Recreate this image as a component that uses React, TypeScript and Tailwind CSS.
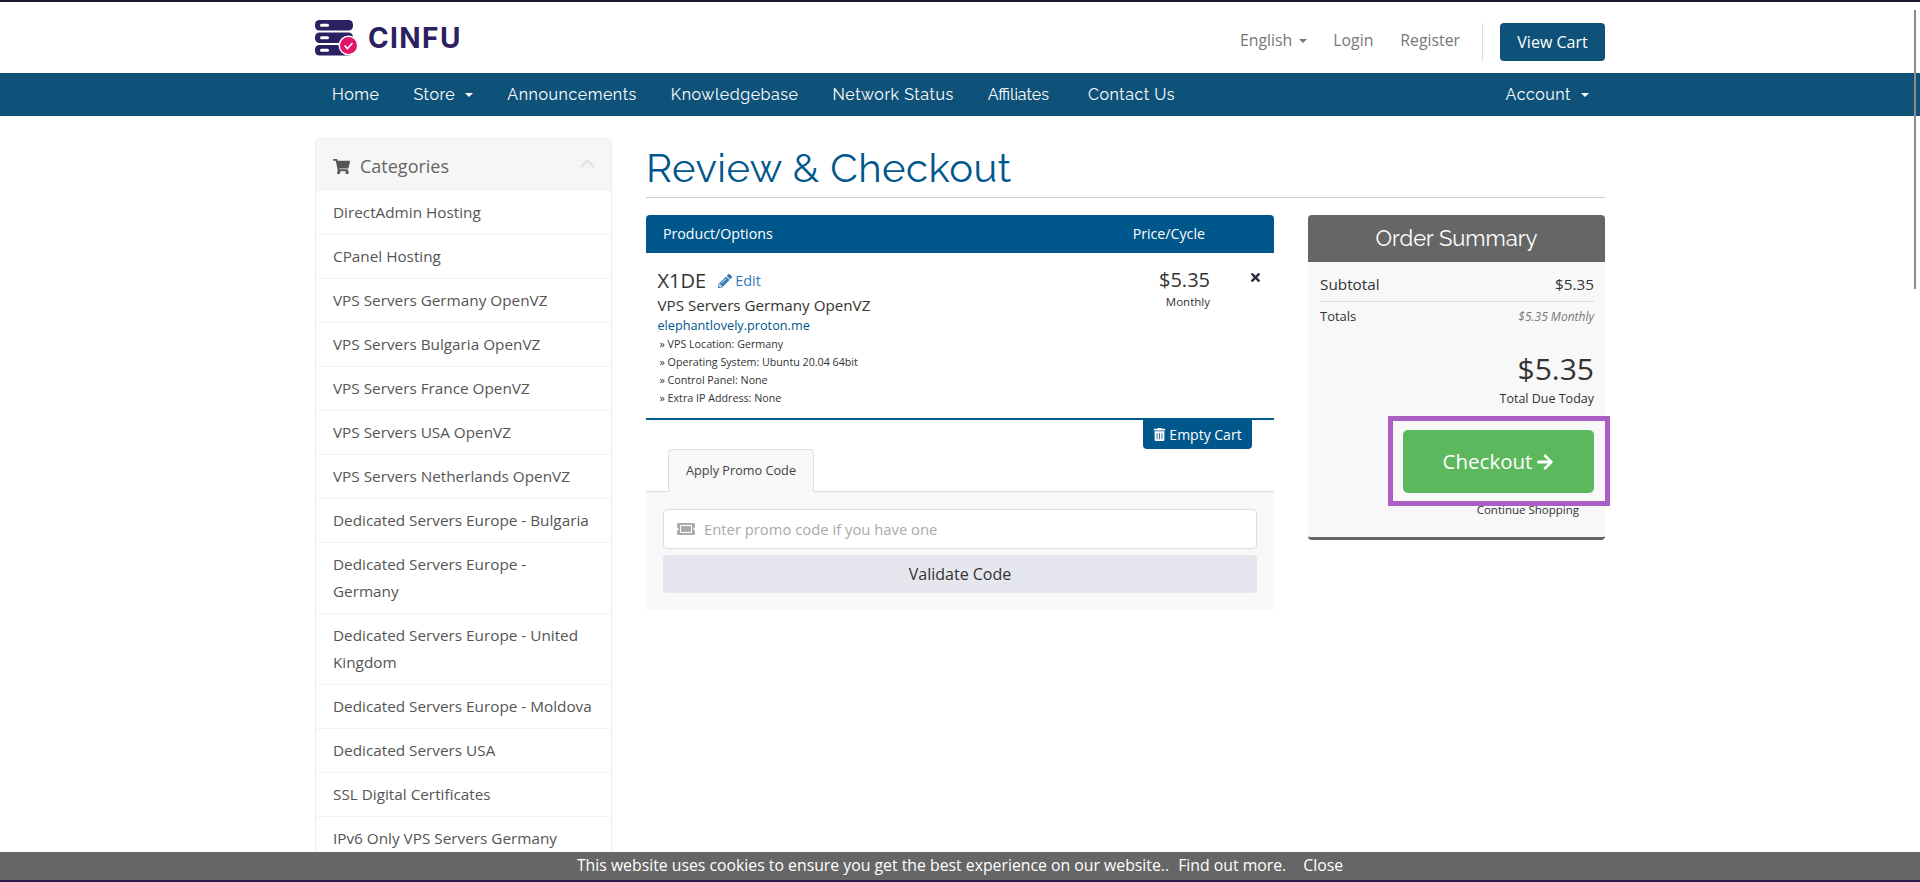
import { FaShoppingCart, FaChevronUp, FaPencilAlt, FaTimes, FaTrashAlt, FaArrowRight, FaTicketAlt } from 'react-icons/fa';

const CATEGORIES = [
  'DirectAdmin Hosting', 'CPanel Hosting', 'VPS Servers Germany OpenVZ', 'VPS Servers Bulgaria OpenVZ',
  'VPS Servers France OpenVZ', 'VPS Servers USA OpenVZ', 'VPS Servers Netherlands OpenVZ',
  'Dedicated Servers Europe - Bulgaria', 'Dedicated Servers Europe - Germany',
  'Dedicated Servers Europe - United Kingdom', 'Dedicated Servers Europe - Moldova',
  'Dedicated Servers USA', 'SSL Digital Certificates', 'IPv6 Only VPS Servers Germany',
];

const NAV = ['Home', 'Store', 'Announcements', 'Knowledgebase', 'Network Status', 'Affiliates', 'Contact Us'];

const OPTIONS = ['VPS Location: Germany', 'Operating System: Ubuntu 20.04 64bit', 'Control Panel: None', 'Extra IP Address: None'];

function Caret({ className }: { className: string }) {
  return <span className={`inline-block w-0 h-0 border-x-[4px] border-x-transparent border-t-[4px] ${className}`} />;
}

function Logo() {
  return (
    <div className="flex items-center gap-[10px]">
      <svg width="43" height="36" viewBox="0 0 43 36">
        <rect x="0" y="0" width="38" height="10.5" rx="4.5" fill="#2b2160" />
        <rect x="0" y="12.5" width="38" height="10.5" rx="4.5" fill="#2b2160" />
        <rect x="0" y="25" width="38" height="10.5" rx="4.5" fill="#2b2160" />
        <rect x="5" y="3.7" width="9" height="3" rx="1.5" fill="#fff" />
        <rect x="5" y="16.2" width="9" height="3" rx="1.5" fill="#fff" />
        <rect x="5" y="28.7" width="9" height="3" rx="1.5" fill="#fff" />
        <circle cx="33.5" cy="25.5" r="10" fill="#fff" />
        <circle cx="33.5" cy="25.5" r="8.5" fill="#e0156b" />
        <path d="M29.5 25.5l3 3 5-5.5" stroke="#fff" strokeWidth="1.6" fill="none" />
      </svg>
      <span className="font-['Inter',sans-serif] font-bold text-[28px] leading-none tracking-[1.4px] text-[#2b2160]">CINFU</span>
    </div>
  );
}

function Header() {
  return (
    <div className="h-[71px] w-[1290px] mx-auto flex items-center justify-between">
      <Logo />
      <div className="flex items-center text-[15.8px] text-[#777] pt-[9px]">
        <span className="flex items-center gap-[7px] pb-[3px]">English <Caret className="border-t-[#777]" /></span>
        <span className="ml-[26px] pb-[3px]">Login</span>
        <span className="ml-[27px] pb-[3px]">Register</span>
        <div className="w-px h-[38px] bg-[#ddd] ml-[22px] mr-[17px]" />
        <button className="h-[38px] w-[105px] bg-[#0f5279] text-white rounded-[4px] text-[16px]">View Cart</button>
      </div>
    </div>
  );
}

function NavBar() {
  return (
    <div className="bg-[#0f5279] h-[43px]">
      <div className="w-[1290px] mx-auto h-full flex items-center justify-between text-white text-[16px] font-['Raleway','Lato',sans-serif] tracking-[0.55px]">
        <div className="flex items-center">
          {NAV.map(n => (
            <span key={n} className={`pl-[17px] flex items-center gap-[10px] ${n === 'Affiliates' ? 'tracking-normal pr-[22px]' : 'pr-[17px]'}`}>
              {n}
              {n === 'Store' && <Caret className="border-t-white" />}
            </span>
          ))}
        </div>
        <span className="px-[17px] flex items-center gap-[10px] mr-[-1px]">Account <Caret className="border-t-white" /></span>
      </div>
    </div>
  );
}

function Sidebar() {
  return (
    <div className="w-[297px] shrink-0 border border-[#eee] rounded-[4px]">
      <div className="h-[52px] bg-[#f6f6f6] flex items-center justify-between pl-[17px] pr-[15px] text-[#666]">
        <span className="flex items-center gap-[10px] text-[18px] pt-[2px]">
          <FaShoppingCart className="text-[#555] text-[17px]" />
          Categories
        </span>
        <FaChevronUp className="text-[#e4e4e4] text-[17px] mb-[4px]" />
      </div>
      {CATEGORIES.map(c => (
        <div key={c} className="pl-[17px] pr-[16px] pt-[8px] pb-[8px] text-[15.3px] leading-[27px] text-[#555] border-b border-[#f3f3f3]">{c}</div>
      ))}
    </div>
  );
}

function CartTable() {
  return (
    <div className="w-[628px] shrink-0">
      <div className="h-[38px] bg-[#00578c] rounded-t-[4px] flex items-center text-white text-[14.2px] pl-[17px]">
        <span>Product/Options</span>
        <span className="ml-[360px]">Price/Cycle</span>
      </div>
      <div className="h-[167px] border-b-2 border-[#00578c] pl-[11.5px] relative text-[#333] flex justify-between">
        <div className="pt-[14px]">
          <div className="flex items-center text-[20px] leading-[28px]">
            X1DE
            <span className="flex items-center gap-[3px] ml-[12px] text-[14.5px] text-[#337ab7]"><FaPencilAlt className="text-[14px]" />Edit</span>
          </div>
          <div className="text-[15.2px] leading-[21px]">VPS Servers Germany OpenVZ</div>
          <div className="text-[12.7px] leading-[18px] mb-[1px] text-[#00578c]">elephantlovely.proton.me</div>
          {OPTIONS.map(o => (
            <div key={o} className="text-[10.7px] leading-[18px] pl-[2px]">» {o}</div>
          ))}
        </div>
        <div className="pt-[13px] pr-[64px] text-right">
          <div className="text-[20px] leading-[28px]">$5.35</div>
          <div className="text-[11.5px] leading-[15px]">Monthly</div>
        </div>
        <FaTimes className="absolute right-[12px] top-[18px] text-[13px] text-[#2b2b3b]" />
      </div>
      <div className="flex justify-end pr-[22px]">
        <button className="h-[29px] w-[109px] bg-[#00578c] text-white text-[14px] rounded-b-[4px] flex items-center justify-center gap-[3px]">
          <FaTrashAlt className="text-[13px]" />Empty Cart
        </button>
      </div>
      <div className="h-[43px] border-b border-[#ddd] pl-[22px]">
        <div className="h-[43px] w-[146px] bg-[#f8f8f8] border border-[#ddd] border-b-0 rounded-t-[4px] flex items-center justify-center text-[12.7px] text-[#444]">Apply Promo Code</div>
      </div>
      <div className="h-[118px] bg-[#f8f8f8] px-[17px] pt-[17px]">
        <div className="h-[40px] bg-white border border-[#ddd] rounded-[4px] flex items-center pl-[13px] text-[14.8px] text-[#aaa]">
          <FaTicketAlt className="text-[18px] text-[#aaa]" />
          <span className="ml-[9px]">Enter promo code if you have one</span>
        </div>
        <button className="mt-[6px] h-[38px] w-full bg-[#e6e6ef] rounded-[4px] text-[16px] text-[#333]">Validate Code</button>
      </div>
    </div>
  );
}

function OrderSummary() {
  return (
    <div className="w-[297px] shrink-0">
      <div className="h-[47px] bg-[#666] rounded-t-[4px] flex items-center justify-center text-white text-[22px] font-['Raleway','Lato',sans-serif]">Order Summary</div>
      <div className="h-[278px] bg-[#f8f8f8] border-b-[3px] border-[#666] rounded-b-[4px] pl-[12px] pr-[11px] text-[#333]">
        <div className="h-[40px] border-b border-[#ddd] flex items-center justify-between text-[15.3px] pt-[5px]">
          <span>Subtotal</span><span>$5.35</span>
        </div>
        <div className="h-[29px] flex items-center justify-between text-[13px]">
          <span>Totals</span><span className="text-[12px] italic text-[#777]">$5.35 Monthly</span>
        </div>
        <div className="text-right text-[30px] leading-[40px] mt-[18px]">$5.35</div>
        <div className="text-right text-[12.5px] leading-[18px] mt-[1px]">Total Due Today</div>
        <div className="flex justify-end mt-[22px]">
          <div className="relative">
            <button className="h-[63px] w-[191px] bg-[#5cb85c] text-white text-[20.5px] rounded-[5px] flex items-center justify-center gap-[4px]">
              Checkout <FaArrowRight className="text-[18px]" />
            </button>
            <div className="absolute left-[-15px] right-[-16px] top-[-14px] bottom-[-13px] border-[5px] border-[#ab5fc4]" />
          </div>
        </div>
        <div className="text-right text-[11.5px] leading-[16px] mt-[9px] pr-[15px]">Continue Shopping</div>
      </div>
    </div>
  );
}

export default function App() {
  return (
    <div className="h-[882px] overflow-hidden relative bg-white font-['Open_Sans',sans-serif]">
      <div className="h-[2px] bg-[#1e1a2b]" />
      <Header />
      <NavBar />
      <div className="w-[1290px] mx-auto flex gap-[34px] pt-[22px]">
        <Sidebar />
        <div className="flex-1">
          <div className="h-[60px] border-b border-[#ccc] font-['Raleway','Lato',sans-serif] text-[40px] leading-[52px] text-[#00578c] tracking-[0.5px] pt-[4px]">Review &amp; Checkout</div>
          <div className="flex justify-between mt-[17px]">
            <CartTable />
            <OrderSummary />
          </div>
        </div>
      </div>
      {/* browser scrollbar thumb */}
      <div className="absolute right-[4px] top-[10px] w-[2px] h-[279px] bg-[#8c8c90]" />
      {/* cookie bar */}
      <div className="absolute left-0 right-0 bottom-0 border-b-2 border-[#2c1a4d] h-[30px] bg-[#666] flex items-center justify-center text-white text-[15.8px]">
        <span>This website uses cookies to ensure you get the best experience on our website..</span>
        <span className="ml-[9px]">Find out more.</span>
        <span className="ml-[17px]">Close</span>
      </div>
    </div>
  );
}
